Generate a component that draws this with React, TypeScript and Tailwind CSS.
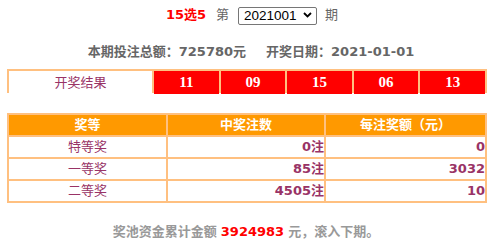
import React from "react";

const balls = ["11", "09", "15", "06", "13"];

const prizes = [
  { name: "特等奖", count: "0注", amount: "0" },
  { name: "一等奖", count: "85注", amount: "3032" },
  { name: "二等奖", count: "4505注", amount: "10" },
];

const cjk = "font-['Tahoma','DejaVu_Sans','Noto_Sans_CJK_SC',sans-serif]";

export default function App() {
  return (
    <div className={`w-[496px] h-[244px] bg-white ${cjk} text-[13px]`}>
      <div className="h-[29px] flex items-center justify-center pl-[8px]">
        <span className="text-[#ff0000] font-bold">15选5</span>
        <span className="ml-[10px] text-[#666666]">第</span>
        <div className="relative ml-[9px] w-[79px] h-[18px]">
          <select
            className="appearance-none w-full h-full border border-[#767676] rounded-[2px] text-[13.5px] leading-[16px] text-black pl-[5px] bg-white font-['Liberation_Sans',sans-serif]"
            defaultValue="2021001"
          >
            <option>2021001</option>
          </select>
          <svg
            className="absolute right-[5px] top-[6px] pointer-events-none"
            width="9"
            height="6"
            viewBox="0 0 9 6"
          >
            <path d="M1 1l3.5 3.5L8 1" fill="none" stroke="#000" strokeWidth="1.8" />
          </svg>
        </div>
        <span className="ml-[8px] text-[#666666]">期</span>
      </div>
      <div className="h-[40px] flex items-end justify-center pb-[8px] pl-[6px] text-[#666666] font-bold">
        <span>本期投注总额：725780元</span>
        <span className="ml-[20px]">开奖日期：2021-01-01</span>
      </div>

      <div className="mx-[7px] w-[480px] bg-[#ffc080] p-[2px] grid grid-cols-[143px_repeat(5,1fr)] gap-[2px] h-[24px]">
        <div className="bg-white flex items-center justify-center text-[#993366]">
          开奖结果
        </div>
        {balls.map((b) => (
          <div
            key={b}
            className="bg-[#ff0000] flex items-center justify-center text-white font-bold text-[15px] font-['Liberation_Serif',serif]"
          >
            {b}
          </div>
        ))}
      </div>

      <div className="mt-[20px] mx-[7px] w-[480px] bg-[#ffc080] p-[2px] grid grid-cols-[157px_156px_1fr] gap-[2px]">
        <div className="bg-[#ff9900] h-[20px] flex items-center justify-center text-white font-bold">
          奖等
        </div>
        <div className="bg-[#ff9900] h-[20px] flex items-center justify-center text-white font-bold">
          中奖注数
        </div>
        <div className="bg-[#ff9900] h-[20px] flex items-center justify-center text-white font-bold">
          每注奖额（元）
        </div>
        {prizes.map((p) => (
          <React.Fragment key={p.name}>
            <div className="bg-white h-[20px] flex items-center justify-center text-[#993366]">
              {p.name}
            </div>
            <div className="bg-white h-[20px] flex items-center justify-end text-[#993366] font-bold">
              {p.count}
            </div>
            <div className="bg-white h-[20px] flex items-center justify-end text-[#993366] font-bold">
              {p.amount}
            </div>
          </React.Fragment>
        ))}
      </div>

      <div className="mt-[19px] flex justify-center text-[#999999] font-bold pr-[4px]">
        <span>奖池资金累计金额</span>
        <span className="mx-[4px] text-[#ff0000]">3924983</span>
        <span>元，滚入下期。</span>
      </div>
    </div>
  );
}
